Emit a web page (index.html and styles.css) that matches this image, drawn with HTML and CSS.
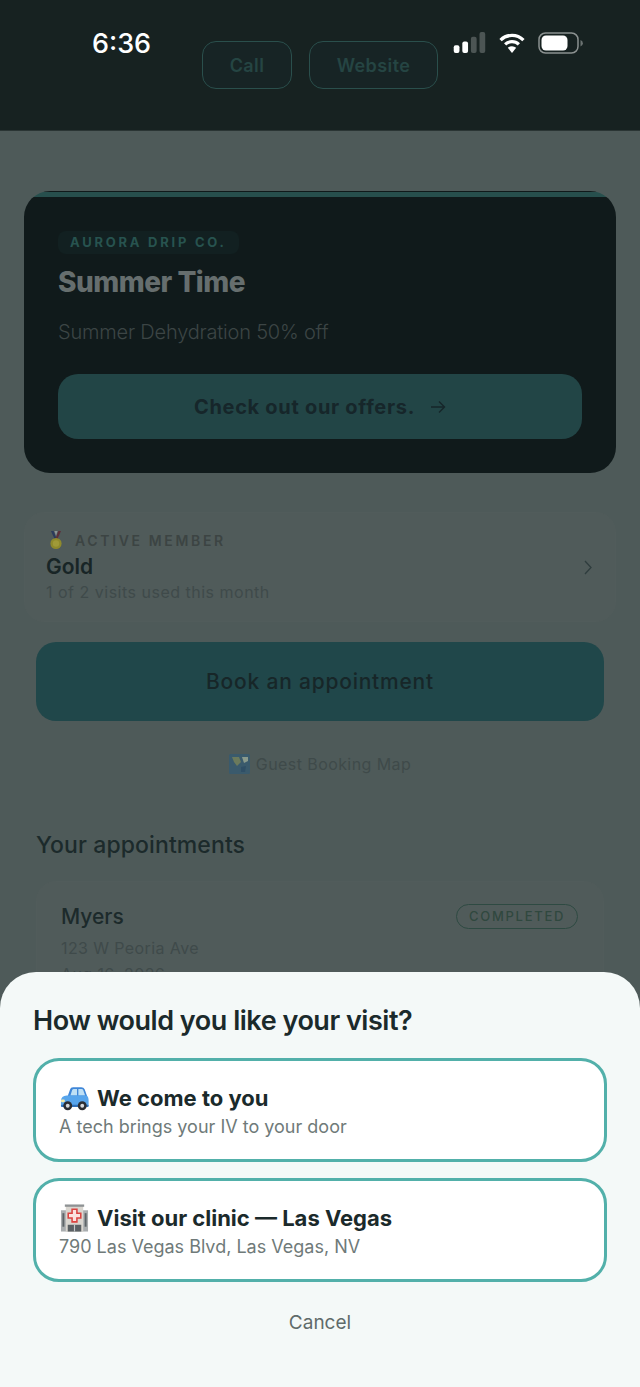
FILE: index.html
```html
<!DOCTYPE html>
<html lang="en">
<head>
    <meta charset="UTF-8">
    <meta name="viewport" content="width=device-width, initial-scale=1.0">
    <title>Aurora Drip Co.</title>
    <link rel="stylesheet" href="styles.css">
</head>
<body>
    <div class="tela">
        <!-- barra de status -->
        <div class="status">
            <span class="hora">6:36</span>
            <div class="status-icones">
                <svg width="34" height="21" viewBox="0 0 34 22">
                    <rect x="1" y="14" width="6" height="8" rx="2" fill="#fff"/>
                    <rect x="10" y="10" width="6" height="12" rx="2" fill="#fff"/>
                    <rect x="19" y="5" width="6" height="17" rx="2" fill="#4c5554"/>
                    <rect x="28" y="0" width="6" height="22" rx="2" fill="#4c5554"/>
                </svg>
                <svg width="28" height="21" viewBox="0 0 28 22">
                    <path d="M2 8.5 A17 17 0 0 1 26 8.5" fill="none" stroke="#fff" stroke-width="3.4"/>
                    <path d="M6.8 13 A10.5 10.5 0 0 1 21.2 13" fill="none" stroke="#fff" stroke-width="3.4"/>
                    <path d="M14 22 L9.6 16.6 A6.4 6.4 0 0 1 18.4 16.6 Z" fill="#fff"/>
                </svg>
                <svg width="46" height="22" viewBox="0 0 46 22">
                    <rect x="1" y="1" width="39" height="20" rx="6.5" fill="none" stroke="#8b9190" stroke-width="1.5"/>
                    <rect x="3.5" y="3.5" width="26" height="15" rx="4.5" fill="#fff"/>
                    <path d="M42.5 8 a3.4 3.4 0 0 1 0 6.5 Z" fill="#6b7271"/>
                </svg>
            </div>
        </div>

        <header class="topo">
            <button class="topo-btn topo-call">Call</button>
            <button class="topo-btn topo-site">Website</button>
        </header>

        <main class="conteudo">
            <section class="promo">
                <span class="promo-marca">AURORA DRIP CO.</span>
                <h2 class="promo-titulo">Summer Time</h2>
                <p class="promo-texto">Summer Dehydration 50% off</p>
                <button class="promo-btn">
                    <span>Check out our offers.</span>
                    <svg width="16" height="14" viewBox="0 0 16 14"><path d="M1 7 H14.5 M9 1.5 L14.5 7 L9 12.5" fill="none" stroke="#16262a" stroke-width="1.4"/></svg>
                </button>
            </section>

            <section class="membro">
                <div class="membro-dados">
                    <div class="membro-label">
                        <svg width="20" height="20" viewBox="0 0 20 20">
                            <path d="M5 1 L9 10 H11 L7.6 1 Z" fill="#2b3a5c"/>
                            <path d="M15 1 L11 10 H9 L12.4 1 Z" fill="#5d2f3a"/>
                            <path d="M8.4 1 L10 6 L11.6 1 Z" fill="#8b9598"/>
                            <circle cx="10" cy="13.5" r="5.6" fill="#8f8a2c"/>
                            <circle cx="10" cy="13.5" r="3.2" fill="#a09a38"/>
                        </svg>
                        <span>ACTIVE MEMBER</span>
                    </div>
                    <div class="membro-plano">Gold</div>
                    <div class="membro-uso">1 of 2 visits used this month</div>
                </div>
                <svg width="8" height="15" viewBox="0 0 8 15"><path d="M1 1 L7 7.5 L1 14" fill="none" stroke="#2f3d3e" stroke-width="1.3"/></svg>
            </section>

            <button class="agendar">Book an appointment</button>

            <div class="mapa">
                <svg width="21" height="20" viewBox="0 0 21 20">
                    <rect width="21" height="20" rx="1.5" fill="#3a5a6c"/>
                    <path d="M3 3 H10 L12 8 L8 12 L5 8 Z" fill="#6b7a5c"/>
                    <path d="M13 3 H19 V7 L15 9 Z" fill="#8a9a8c"/>
                    <path d="M12 13 L17 12 L16 18 H12 Z" fill="#2f4f66"/>
                </svg>
                <span>Guest Booking Map</span>
            </div>

            <h3 class="secao">Your appointments</h3>

            <section class="consulta">
                <div class="consulta-linha">
                    <span class="consulta-nome">Myers</span>
                    <span class="consulta-status">COMPLETED</span>
                </div>
                <div class="consulta-info">123 W Peoria Ave</div>
                <div class="consulta-info">Aug 16, 2026</div>
            </section>
        </main>

        <!-- folha de baixo -->
        <div class="folha">
            <h2 class="folha-titulo">How would you like your visit?</h2>

            <button class="opcao">
                <span class="opcao-titulo">
                    <svg width="29" height="26" viewBox="0 0 30 26">
                        <path d="M8 11 L10.5 4 Q11 2 13.5 2 H22 Q24.5 2 25.5 4 L28 11 Z" fill="#3f86d8"/>
                        <path d="M10.8 10.5 L12.6 4.6 Q13 3.6 14.4 3.6 H17.6 V10.5 Z M19 3.6 H22.4 Q23.6 3.6 24 4.6 L26 10.5 H19 Z" fill="#bfe0f5"/>
                        <path d="M1 16 Q1 11 7 10.5 H27 Q29.6 11 29.6 16 V20.5 Q29.6 22 28 22 H2.6 Q1 22 1 20.5 Z" fill="#57a5ec"/>
                        <rect x="1" y="14.5" width="4" height="3" rx="1.2" fill="#f2e9a8"/>
                        <rect x="1" y="20" width="28.6" height="2.4" rx="1" fill="#2f6fb8"/>
                        <circle cx="8" cy="21" r="4.6" fill="#2a2d33"/>
                        <circle cx="8" cy="21" r="2" fill="#d5d8dc"/>
                        <circle cx="23" cy="21" r="4.6" fill="#2a2d33"/>
                        <circle cx="23" cy="21" r="2" fill="#d5d8dc"/>
                    </svg>
                    We come to you
                </span>
                <span class="opcao-texto">A tech brings your IV to your door</span>
            </button>

            <button class="opcao">
                <span class="opcao-titulo">
                    <svg width="29" height="28" viewBox="0 0 30 28">
                        <rect x="1" y="6" width="28" height="22" fill="#a9adaf"/>
                        <rect x="6" y="1" width="18" height="27" fill="#d9d6d0"/>
                        <rect x="5" y="0" width="20" height="2.4" fill="#8e9294"/>
                        <rect x="2.5" y="9" width="2" height="14" fill="#5d6468"/>
                        <rect x="25.5" y="9" width="2" height="14" fill="#5d6468"/>
                        <path d="M12.5 5 H17.5 V9 H21.5 V14 H17.5 V18 H12.5 V14 H8.5 V9 H12.5 Z" fill="#fbe3e0" stroke="#dc4340" stroke-width="1.6"/>
                        <rect x="8" y="21" width="14" height="7" fill="#5a6064"/>
                        <rect x="14.4" y="21" width="1.2" height="7" fill="#c4c8ca"/>
                    </svg>
                    Visit our clinic — Las Vegas
                </span>
                <span class="opcao-texto">790 Las Vegas Blvd, Las Vegas, NV</span>
            </button>

            <button class="cancelar">Cancel</button>
        </div>
    </div>
</body>
</html>
```

FILE: styles.css
```css
* {
    box-sizing: border-box;
}

body {
    margin: 0;
    font-family: Inter, "Liberation Sans", sans-serif;
    background-color: #4e5a59;
}

button {
    font-family: inherit;
    cursor: pointer;
}

h2, h3, p {
    margin: 0;
}

.tela {
    position: relative;
    height: 100vh;
    overflow: hidden;
}

/* status */
.status {
    position: absolute;
    top: 0;
    left: 0;
    right: 0;
    height: 64px;
    display: flex;
    justify-content: space-between;
    align-items: center;
    padding: 23px 56px 0 92px;
    color: #fff;
}

.hora {
    font-size: 27px;
    font-weight: 500;
    line-height: 34px;
    margin-top: 1px;
}

.status-icones {
    display: flex;
    align-items: center;
    gap: 12px;
    margin-top: -2px;
}

.status-icones svg {
    display: block;
}

/* topo */
.topo {
    height: 131px;
    padding-top: 41px;
    display: flex;
    justify-content: center;
    gap: 17px;
    background-color: #172221;
    border-bottom: 1px solid #2a3534;
}

.topo-btn {
    height: 48px;
    border: 1.5px solid #2a4f4c;
    border-radius: 14px;
    background-color: #172425;
    color: #254543;
    font-size: 18px;
    font-weight: 600;
    letter-spacing: 0.4px;
}

.topo-call {
    width: 90px;
}

.topo-site {
    width: 129px;
}

/* conteudo */
.conteudo {
    padding: 60px 24px 0;
}

.promo {
    height: 282px;
    padding: 40px 34px 0;
    border-radius: 26px;
    background: linear-gradient(#101a1b 1px, #274f4d 1px, #274f4d 6px, #101a1b 6px);
}

.promo-marca {
    display: inline-block;
    height: 23px;
    padding: 0 12px;
    border-radius: 8px;
    background-color: #122021;
    color: #27534f;
    font-size: 13px;
    font-weight: 700;
    line-height: 23px;
    letter-spacing: 2.75px;
}

.promo-titulo {
    margin-top: 9px;
    color: #666e6e;
    font-size: 28px;
    font-weight: 800;
    line-height: 38px;
    letter-spacing: -0.5px;
}

.promo-texto {
    margin-top: 18px;
    color: #3c4545;
    font-size: 20px;
    font-weight: 300;
    line-height: 26px;
    letter-spacing: -0.2px;
}

.promo-btn {
    width: 100%;
    height: 65px;
    margin-top: 29px;
    display: flex;
    justify-content: center;
    align-items: center;
    gap: 15px;
    border: none;
    border-radius: 20px;
    background-color: #224546;
    color: #16262a;
    font-size: 20px;
    font-weight: 700;
    letter-spacing: 0.7px;
}

.membro {
    height: 110px;
    margin-top: 39px;
    padding: 0 23px 0 21px;
    display: flex;
    justify-content: space-between;
    align-items: center;
    border: 1px solid #515c5b;
    border-radius: 20px;
    background-color: #505b5a;
}

.membro-dados {
    align-self: flex-start;
    margin-top: 16px;
}

.membro-label {
    display: flex;
    align-items: center;
    gap: 9px;
    height: 22px;
    color: #3c4443;
    font-size: 14px;
    font-weight: 600;
    letter-spacing: 2.65px;
}

.membro-plano {
    margin-top: 1px;
    color: #182526;
    font-size: 21px;
    font-weight: 600;
    line-height: 29px;
}

.membro-uso {
    margin-top: 0;
    color: #3f4a4a;
    font-size: 16px;
    line-height: 22px;
    letter-spacing: 0.5px;
}

.agendar {
    display: block;
    width: 568px;
    height: 79px;
    margin: 20px 12px 0;
    border: none;
    border-radius: 20px;
    background-color: #20474a;
    color: #172628;
    font-size: 21px;
    font-weight: 500;
    letter-spacing: 0.78px;
}

.mapa {
    margin-top: 32px;
    display: flex;
    justify-content: center;
    align-items: center;
    gap: 6px;
    color: #3f4a4a;
    font-size: 16px;
    line-height: 22px;
    letter-spacing: 0.42px;
}

.secao {
    margin: 55px 12px 0;
    color: #1c2a2b;
    font-size: 23px;
    font-weight: 500;
    line-height: 30px;
    letter-spacing: 0.1px;
}

.consulta {
    margin: 21px 12px 0;
    padding: 22px 24px;
    border: 1px solid #515c5b;
    border-radius: 20px;
    background-color: #505b5a;
}

.consulta-linha {
    display: flex;
    justify-content: space-between;
    align-items: center;
}

.consulta-nome {
    color: #1c2a2b;
    font-size: 21px;
    font-weight: 500;
}

.consulta-status {
    height: 25px;
    margin-right: 1px;
    padding: 0 12px;
    border: 1.5px solid #2e4a42;
    border-radius: 13px;
    color: #30483f;
    font-size: 13px;
    font-weight: 500;
    line-height: 22px;
    letter-spacing: 1.7px;
}

.consulta-info {
    margin-top: 8px;
    color: #3f4a4a;
    font-size: 16px;
    line-height: 22px;
    letter-spacing: 0.4px;
}

.consulta-info + .consulta-info {
    margin-top: 4px;
}

/* folha */
.folha {
    position: absolute;
    top: 972px;
    left: 0;
    right: 0;
    bottom: 0;
    padding: 32px 33px 0;
    border-radius: 36px 36px 0 0;
    background-color: #f4f9f8;
}

.folha-titulo {
    color: #1b2a2b;
    font-size: 27px;
    font-weight: 600;
    line-height: 34px;
    letter-spacing: -0.47px;
}

.opcao {
    display: block;
    width: 100%;
    height: 104px;
    margin-top: 20px;
    padding: 2px 23px 0 24px;
    border: 3px solid #52b0aa;
    border-radius: 26px;
    background-color: #fff;
    text-align: left;
}

.opcao + .opcao {
    margin-top: 16px;
}

.opcao-titulo {
    display: flex;
    align-items: center;
    gap: 8px;
    color: #1b2a2b;
    font-size: 22px;
    font-weight: 700;
    line-height: 30px;
}

.opcao-texto {
    display: block;
    margin-top: 2px;
    margin-left: -1px;
    color: #6f7a79;
    font-size: 18px;
    line-height: 24px;
}

.cancelar {
    display: block;
    margin: 27px auto 0;
    padding: 0;
    border: none;
    background: none;
    color: #5f6b6a;
    font-size: 19px;
    line-height: 28px;
}
```
